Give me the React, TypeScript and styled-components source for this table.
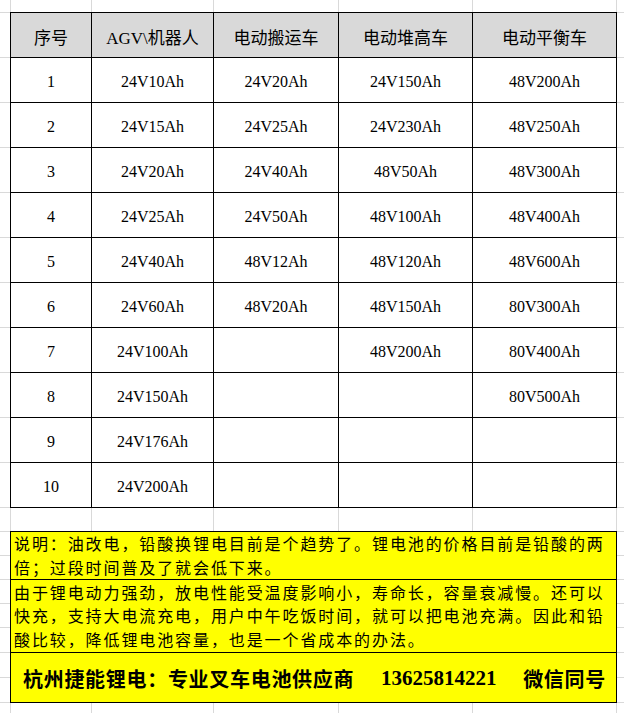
import React from 'react';
import styled, { createGlobalStyle } from 'styled-components';

const GlobalStyle = createGlobalStyle`
    html, body {
        margin: 0;
        padding: 0;
        background: #ffffff;
        overflow: hidden;
    }
    body {
        font-family: "Liberation Serif", "Noto Sans CJK SC", serif;
        color: #000000;
    }
`;

const COLS = ['10px', '81px', '122px', '125px', '134px', '144px', '1fr'];
const ROWS = [12, 45, 45, 45, 45, 45, 45, 45, 45, 45, 45, 45, 24, 24, 24, 24, 24, 25, 25, 25, 24];

const Sheet = styled.div`
    display: grid;
    grid-template-columns: ${COLS.join(' ')};
    grid-template-rows: ${ROWS.map((r) => r + 'px').join(' ')} 1fr;
    height: 100vh;
    overflow: hidden;
`;

const GridCell = styled.div<{ $row: number; $col: number }>`
    grid-row: ${(p) => p.$row};
    grid-column: ${(p) => p.$col};
    border-left: ${(p) => (p.$col > 1 ? '1px solid #d9d9d9' : 'none')};
    border-top: ${(p) => (p.$row > 1 ? '1px solid #d9d9d9' : 'none')};
`;

const Table = styled.div`
    grid-row: 2 / 13;
    grid-column: 2 / 7;
    margin: 0 -1px -1px 0;
    z-index: 1;
    display: grid;
    grid-template-columns: 80px 121px 124px 133px 1fr;
    grid-auto-rows: 1fr;
    gap: 1px;
    background: #000000;
    border: 1px solid #000000;
`;

const Cell = styled.div<{ $head?: boolean }>`
    display: flex;
    align-items: center;
    justify-content: center;
    padding-top: ${(p) => (p.$head ? '2px' : '4px')};
    box-sizing: border-box;
    background: ${(p) => (p.$head ? '#d9d9d9' : '#ffffff')};
    font-size: ${(p) => (p.$head ? '17px' : '16px')};
    white-space: nowrap;
`;

const Note = styled.div`
    grid-row: 14 / 21;
    grid-column: 2 / 7;
    margin: 0 -1px -1px 0;
    z-index: 1;
    display: grid;
    grid-template-rows: 47px 72px 1fr;
    gap: 1px;
    background: #000000;
    border: 1px solid #000000;
`;

const Para = styled.div`
    background: #ffff00;
    display: flex;
    flex-direction: column;
    justify-content: center;
    padding-left: 3px;
    font-family: "Noto Sans CJK SC", sans-serif;
    font-size: 16px;
    letter-spacing: 1.9px;
    line-height: 23.5px;
`;

const Line = styled.span`
    white-space: nowrap;
`;

const Footer = styled.div`
    background: #ffff00;
    display: flex;
    align-items: center;
    justify-content: space-between;
    padding: 2px 10px 0 12px;
    font-weight: 700;
    white-space: nowrap;
`;

const Company = styled.span`
    font-family: "Noto Sans CJK SC", sans-serif;
    font-size: 20px;
    letter-spacing: 0.7px;
`;

const Phone = styled.span`
    font-family: "Liberation Serif", serif;
    font-size: 21px;
`;

const headers = ['序号', 'AGV\\机器人', '电动搬运车', '电动堆高车', '电动平衡车'];

const agv = ['24V10Ah', '24V15Ah', '24V20Ah', '24V25Ah', '24V40Ah', '24V60Ah', '24V100Ah', '24V150Ah', '24V176Ah', '24V200Ah'];
const carrier = ['24V20Ah', '24V25Ah', '24V40Ah', '24V50Ah', '48V12Ah', '48V20Ah'];
const stacker = ['24V150Ah', '24V230Ah', '48V50Ah', '48V100Ah', '48V120Ah', '48V150Ah', '48V200Ah'];
const balance = ['48V200Ah', '48V250Ah', '48V300Ah', '48V400Ah', '48V600Ah', '80V300Ah', '80V400Ah', '80V500Ah'];

const rows = agv.map((a, i) => [String(i + 1), a, carrier[i] ?? '', stacker[i] ?? '', balance[i] ?? '']);

export default function App() {
    const gridCells = [];
    for (let r = 1; r <= ROWS.length + 1; r++) {
        for (let c = 1; c <= COLS.length; c++) {
            gridCells.push(<GridCell key={`${r}-${c}`} $row={r} $col={c} />);
        }
    }

    return (
        <>
            <GlobalStyle />
            <Sheet>
                {gridCells}
                <Table>
                    {headers.map((h) => (
                        <Cell key={h} $head>{h}</Cell>
                    ))}
                    {rows.map((row, i) =>
                        row.map((v, j) => <Cell key={`${i}-${j}`}>{v}</Cell>)
                    )}
                </Table>
                <Note>
                    <Para>
                        <Line>说明：油改电，铅酸换锂电目前是个趋势了。锂电池的价格目前是铅酸的两</Line>
                        <Line>倍；过段时间普及了就会低下来。</Line>
                    </Para>
                    <Para>
                        <Line>由于锂电动力强劲，放电性能受温度影响小，寿命长，容量衰减慢。还可以</Line>
                        <Line>快充，支持大电流充电，用户中午吃饭时间，就可以把电池充满。因此和铅</Line>
                        <Line>酸比较，降低锂电池容量，也是一个省成本的办法。</Line>
                    </Para>
                    <Footer>
                        <Company>杭州捷能锂电：专业叉车电池供应商</Company>
                        <Phone>13625814221</Phone>
                        <Company>微信同号</Company>
                    </Footer>
                </Note>
            </Sheet>
        </>
    );
}
